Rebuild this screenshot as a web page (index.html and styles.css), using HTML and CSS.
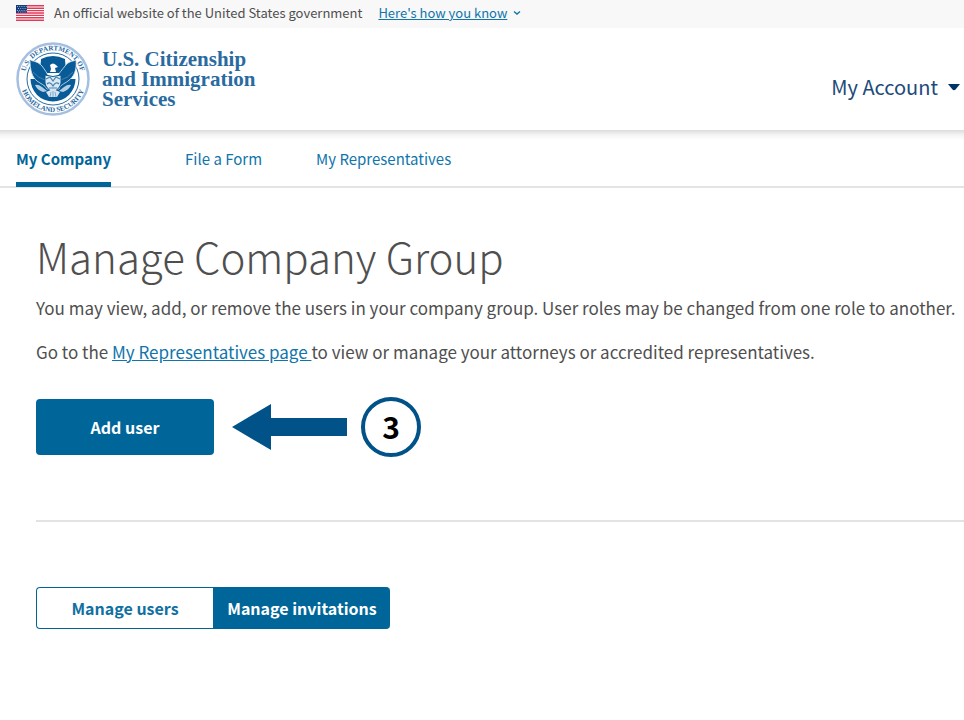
FILE: index.html
```html
<!DOCTYPE html>
<html lang="en">
<head>
  <meta charset="UTF-8" />
  <meta name="viewport" content="width=device-width, initial-scale=1.0" />
  <title>Manage Company Group</title>
  <link rel="stylesheet" href="styles.css">
</head>
<body>
  <div class="banner">
    <svg class="flag" viewBox="0 0 28 16" aria-hidden="true">
      <rect width="28" height="16" fill="#fff" />
      <path d="M0 .8H28M0 3.2H28M0 5.6H28M0 8H28M0 10.4H28M0 12.8H28M0 15.2H28" stroke="#df3a58" stroke-width="1.4" />
      <rect width="11" height="8" fill="#163d7c" />
      <path d="M1 1.5H11M2 3.5H11M1 5.5H11M2 7H11" stroke="#b9c8df" stroke-width=".8" stroke-dasharray="1 1.2" />
    </svg>
    <span>An official website of the United States government</span>
    <a href="#">Here's how you know</a>
    <svg class="chevron" viewBox="0 0 8 6" aria-hidden="true">
      <path d="M1 1.5L4 4L7 1.5" fill="none" stroke="currentColor" stroke-width="1.4" />
    </svg>
  </div>

  <header class="header">
    <a href="#" class="logo">
      <svg class="seal" viewBox="0 0 74 74" aria-hidden="true">
        <defs>
          <path id="sealTop" d="M9 43A28.640 28.640 0 1 1 65 43" />
          <path id="sealBottom" d="M4 37A33 33 0 0 0 70 37" />
        </defs>
        <circle cx="37" cy="37" r="35.500" fill="#fff" stroke="#a5bfe0" stroke-width="2.500" />
        <circle cx="37" cy="37" r="26" fill="#fff" stroke="#2d6ca3" stroke-width="1" />
        <path d="M14.500 37H59.500A22.500 22.500 0 0 1 14.500 37Z" fill="#085b96" />
        <path d="M25 17Q37 11 49 17L50 31H24Z" fill="#085b96" />
        <path d="M14 18C19 20 21 19 26 24C29 28 31 31 33 35L41 35C43 31 46 28 49 24C53 19 55 20 60 18C61 28 58 35 52 39C48 42 44 43 43 47L31 47C29 43 25 42 21 39C16 35 14 28 14 18Z" fill="#085b96" stroke="#dce8f2" stroke-width=".8" />
        <path d="M17 30Q22 36 29 38M57 30Q52 36 45 38" fill="none" stroke="#5d91bb" stroke-width=".7" />
        <path d="M34 23Q37 20 40 23L42 25L39 26L40 30L34 30L35 27Z" fill="#fff" />
        <path d="M29 33Q37 36 45 33V41Q44 47 37 50Q30 47 29 41Z" fill="#dce8f2" stroke="#085b96" />
        <path d="M30 37L34 35L37 39L40 35L44 37M31 42Q34 39 37 44Q40 39 43 42M33 46H41" fill="none" stroke="#4583b2" stroke-width="1.200" />
        <path d="M19 43Q22 42 26 45L31 49L27 50Q21 48 19 43ZM55 43Q52 42 48 45L43 49L47 50Q53 48 55 43Z" fill="#b4cee3" />
        <path d="M30 50L37 47L44 50L41 55H33Z" fill="#d5e4f0" />
        <path d="M35 50L34 55M37 49V55M39 50L40 55" stroke="#5d91bb" stroke-width=".7" />
        <text class="seal-text"><textPath href="#sealTop" startOffset="50%" text-anchor="middle">U.S. DEPARTMENT OF</textPath></text>
        <text class="seal-text"><textPath href="#sealBottom" startOffset="50%" text-anchor="middle">HOMELAND SECURITY</textPath></text>
      </svg>
      <span class="logo-name">U.S. Citizenship<br>and Immigration<br>Services</span>
    </a>
    <button type="button" class="account">
      My Account
      <svg class="caret" viewBox="0 0 12 7" aria-hidden="true"><path d="M0 0H12L7.500 5.500Q6 7 4.500 5.500Z" fill="currentColor" /></svg>
    </button>
  </header>

  <nav class="nav">
    <a href="#" class="active">My Company</a>
    <a href="#">File a Form</a>
    <a href="#">My Representatives</a>
  </nav>

  <main class="main">
    <h1>Manage Company Group</h1>
    <p>You may view, add, or remove the users in your company group. User roles may be changed from one role to another.</p>
    <p>Go to the <a href="#">My Representatives page&nbsp;</a>to view or manage your attorneys or accredited representatives.</p>

    <div class="actions">
      <button type="button" class="btn">Add user</button>
      <svg class="arrow" viewBox="0 0 115 46" aria-hidden="true">
        <path d="M0 23L39 0V14H115V32H39V46Z" fill="#005288" />
      </svg>
      <span class="step">3</span>
    </div>

    <hr>

    <div class="toggle">
      <button type="button">Manage users</button>
      <button type="button" class="selected">Manage invitations</button>
    </div>
  </main>
</body>
</html>
```
FILE: styles.css
```css
* {
  box-sizing: border-box;
}
body {
  margin: 0;
  font-family: "Noto Sans CJK SC", "Open Sans", sans-serif;
  font-size: 17px;
  line-height: 24px;
  color: #4f4f4f;
  background-color: #fff;
}
a {
  color: #0f75ab;
}
button {
  font-family: inherit;
  cursor: pointer;
}
.banner {
  display: flex;
  align-items: center;
  height: 28px;
  padding: 0 16px 2px;
  font-size: 13px;
  background-color: #f8f8f8;
}
.flag {
  width: 28px;
  height: 16px;
  margin-right: 10px;
}
.banner a {
  margin-left: 16px;
}
.chevron {
  width: 8px;
  height: 6px;
  margin-left: 6px;
  color: #0f75ab;
}
.header {
  display: flex;
  align-items: center;
  justify-content: space-between;
  height: 102px;
  padding: 0 4px 0 16px;
}
.logo {
  display: flex;
  align-items: center;
  gap: 12px;
  color: #2a6b9f;
  text-decoration: none;
}
.seal {
  width: 74px;
  height: 74px;
}
.seal-text {
  font-family: "Liberation Serif", serif;
  font-size: 7px;
  font-weight: bold;
  fill: #2867a0;
}
.logo-name {
  font-family: "Liberation Serif", serif;
  font-size: 21px;
  font-weight: bold;
  line-height: 20px;
}
.account {
  display: flex;
  align-items: center;
  gap: 10px;
  margin-top: 16px;
  padding: 0;
  border: none;
  background: none;
  font-size: 20px;
  line-height: 24px;
  color: #1d4a7a;
}
.caret {
  width: 12px;
  height: 7px;
  color: #003366;
}
.nav {
  display: flex;
  height: 58px;
  padding: 0 16px;
  border-bottom: 2px solid #e4e4e4;
  background: linear-gradient(#dcdcdc, #f4f4f4 5px, #fff 10px);
}
.nav a {
  height: 57px;
  margin-right: 54px;
  padding-top: 17px;
  font-size: 15px;
  text-decoration: none;
}
.nav .active {
  margin-right: 74px;
  border-bottom: 5px solid #006699;
  font-weight: bold;
  color: #006699;
}
.main {
  padding: 38px 0 40px 36px;
}
h1 {
  margin: 0;
  font-size: 42px;
  font-weight: 300;
  line-height: 60px;
}
p {
  margin: 10px 0 20px;
}
p + p {
  margin-top: 0;
}
.actions {
  display: flex;
  align-items: center;
  margin-top: 33px;
}
.btn {
  width: 178px;
  height: 56px;
  border: none;
  border-radius: 4px;
  font-size: 16px;
  font-weight: bold;
  color: #fff;
  background-color: #006699;
}
.arrow {
  width: 115px;
  height: 46px;
  margin: 0 14px 0 18px;
}
.step {
  width: 60px;
  height: 60px;
  border: 4px solid #005288;
  border-radius: 50%;
  font-size: 30px;
  font-weight: bold;
  line-height: 50px;
  text-align: center;
  color: #000;
}
hr {
  margin: 63px 0 65px;
  border: none;
  border-top: 2px solid #e3e3e3;
}
.toggle {
  display: flex;
}
.toggle button {
  width: 177px;
  height: 42px;
  padding: 0;
  border: 1px solid #006699;
  border-right: none;
  border-radius: 4px 0 0 4px;
  font-size: 16px;
  font-weight: bold;
  color: #1070a2;
  background-color: #fff;
}
.toggle .selected {
  border-radius: 0 4px 4px 0;
  color: #fff;
  background-color: #006699;
}
```
